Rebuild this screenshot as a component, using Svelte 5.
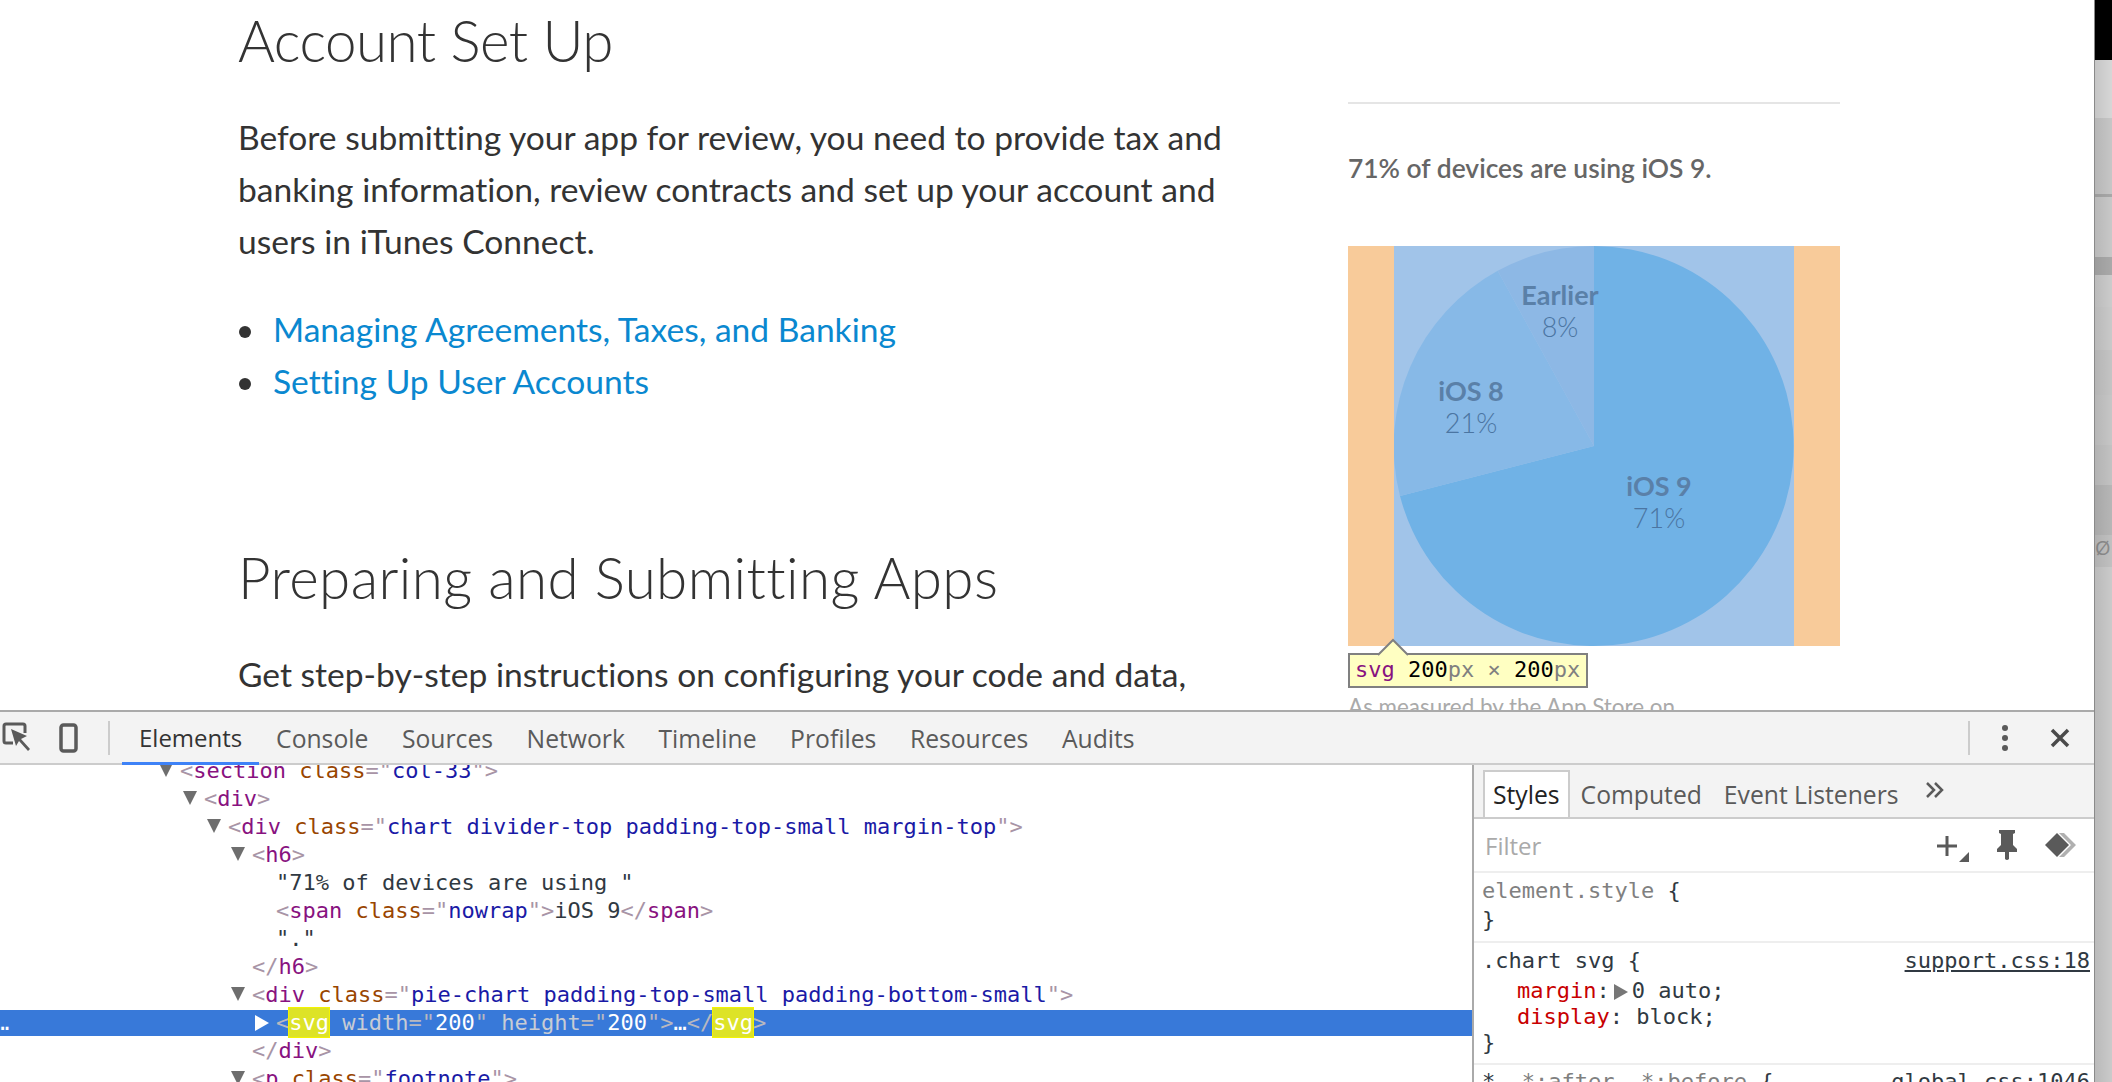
<script>
  const rows = [
    { level: 0, open: true, parts: [['b', '<'], ['t', 'section'], ['a', ' class'], ['b', '="'], ['v', 'col-33'], ['b', '">']] },
    { level: 1, open: true, parts: [['b', '<'], ['t', 'div'], ['b', '>']] },
    { level: 2, open: true, parts: [['b', '<'], ['t', 'div'], ['a', ' class'], ['b', '="'], ['v', 'chart divider-top padding-top-small margin-top'], ['b', '">']] },
    { level: 3, open: true, parts: [['b', '<'], ['t', 'h6'], ['b', '>']] },
    { level: 4, parts: [['x', '"71% of devices are using "']] },
    { level: 4, parts: [['b', '<'], ['t', 'span'], ['a', ' class'], ['b', '="'], ['v', 'nowrap'], ['b', '">'], ['x', 'iOS 9'], ['b', '</'], ['t', 'span'], ['b', '>']] },
    { level: 4, parts: [['x', '"."']] },
    { level: 3, parts: [['b', '</'], ['t', 'h6'], ['b', '>']] },
    { level: 3, open: true, parts: [['b', '<'], ['t', 'div'], ['a', ' class'], ['b', '="'], ['v', 'pie-chart padding-top-small padding-bottom-small'], ['b', '">']] },
    { level: 4, closed: true, selected: true, parts: [['b', '<'], ['h', 'svg'], ['a', ' width'], ['b', '="'], ['v', '200'], ['b', '"'], ['a', ' height'], ['b', '="'], ['v', '200'], ['b', '">'], ['x', '…'], ['b', '</'], ['h', 'svg'], ['b', '>']] },
    { level: 3, parts: [['b', '</'], ['t', 'div'], ['b', '>']] },
    { level: 3, open: true, parts: [['b', '<'], ['t', 'p'], ['a', ' class'], ['b', '="'], ['v', 'footnote'], ['b', '">']] }
  ];
  const tabs = ['Elements', 'Console', 'Sources', 'Network', 'Timeline', 'Profiles', 'Resources', 'Audits'];
  const bands = [
    { h: 60, c: '#000' }, { h: 58, c: '#d6d6d6' }, { h: 76, c: '#c6c6c6' }, { h: 3, c: '#a8a8a8' },
    { h: 60, c: '#c8c8c8' }, { h: 18, c: '#a9a9a9' }, { h: 32, c: '#cbcbcb' }, { h: 43, c: '#c9c9c9' },
    { h: 45, c: '#c4c4c4' }, { h: 50, c: '#c6c6c6' }, { h: 40, c: '#c2c2c2' }, { h: 50, c: '#b6b6b6' },
    { h: 32, c: '#c0c0c0', mark: 'Ø' }, { h: 515, c: '#cacaca' }
  ];
</script>

<div class="screen">
  <div class="main">
    <div class="page">
      <div class="article">
        <h2 class="first">Account Set Up</h2>
        <p>Before submitting your app for review, you need to provide tax and banking information, review contracts and set up your account and users in iTunes Connect.</p>
        <ul>
          <li><a href="#a">Managing Agreements, Taxes, and Banking</a></li>
          <li><a href="#b">Setting Up User Accounts</a></li>
        </ul>
        <h2 class="second">Preparing and Submitting Apps</h2>
        <p>Get step-by-step instructions on configuring your code and data,</p>
      </div>
      <div class="aside">
        <h6>71% of devices are using iOS 9.</h6>
        <div class="chart">
          <svg width="400" height="400" viewBox="0 0 400 400">
            <rect width="400" height="400" fill="#a1c4e9" />
            <path d="M200 200 L200 0 A200 200 0 1 1 6 250 Z" fill="#70b2e6" />
            <path d="M200 200 L6 250 A200 200 0 0 1 103.700 24.800 Z" fill="#87b9e7" />
            <path d="M200 200 L103.700 24.800 A200 200 0 0 1 200 0 Z" fill="#8db8e5" />
            <g class="labels">
              <text class="name" x="166" y="59">Earlier</text>
              <text class="pct" x="166" y="91">8%</text>
              <text class="name" x="77" y="155">iOS 8</text>
              <text class="pct" x="77" y="187">21%</text>
              <text class="name" x="265" y="250">iOS 9</text>
              <text class="pct" x="265" y="282">71%</text>
            </g>
          </svg>
        </div>
        <p class="footnote">As measured by the App Store on</p>
        <div class="tip"><svg class="tip-arrow" width="32" height="18" viewBox="0 0 32 18"><path d="M1 17 L16 2 L31 17" fill="#ffffc2" stroke="#808080" stroke-width="2" /></svg><span class="tip-tag">svg</span>{' 200'}<span class="tip-px">{'px × '}</span>200<span class="tip-px">px</span></div>
      </div>
    </div>

    <div class="devtools">
      <div class="toolbar">
        <svg class="ic-inspect" width="34" height="34" viewBox="0 0 34 34">
          <path d="M12 22 H5 Q3 22 3 20 V5 Q3 3 5 3 H22 Q24 3 24 5 V12" fill="none" stroke="#5a5a5a" stroke-width="3" />
          <path d="M10 8 L26 15 L20 18 L29 28 L27 30 L18 20 L15 25 Z" fill="#5a5a5a" />
        </svg>
        <svg class="ic-device" width="20" height="30" viewBox="0 0 20 30">
          <rect x="2" y="2" width="15" height="26" rx="2.500" fill="none" stroke="#5a5a5a" stroke-width="3.500" />
        </svg>
        <span class="sep"></span>
        <div class="tabs">
          {#each tabs as tab, i}
            <span class="tab" class:active={i === 0}>{tab}</span>
          {/each}
        </div>
        <span class="spacer"></span>
        <span class="sep"></span>
        <svg class="ic-more" width="8" height="28" viewBox="0 0 8 28">
          <circle cx="4" cy="4" r="3" fill="#5a5a5a" /><circle cx="4" cy="14" r="3" fill="#5a5a5a" /><circle cx="4" cy="24" r="3" fill="#5a5a5a" />
        </svg>
        <svg class="ic-close" width="20" height="20" viewBox="0 0 20 20">
          <path d="M2 2 L18 18 M18 2 L2 18" stroke="#4a4a4a" stroke-width="3.500" />
        </svg>
      </div>
      <div class="panes">
        <div class="tree">
          <div class="tree-inner">
            {#each rows as row}
              <div class="row" class:selected={row.selected} style="padding-left: {180 + row.level * 24}px">{#if row.selected}<span class="dots">…</span>{/if}{#if row.open}<span class="tri down"></span>{/if}{#if row.closed}<span class="tri right"></span>{/if}{#each row.parts as [k, text]}<span class={k}>{text}</span>{/each}</div>
            {/each}
          </div>
        </div>
        <div class="sidebar">
          <div class="side-tabs">
            <span class="side-tab on">Styles</span>
            <span class="side-tab">Computed</span>
            <span class="side-tab">Event Listeners</span>
            <svg class="ic-chev" width="20" height="18" viewBox="0 0 20 18">
              <path d="M2 2 L9 9 L2 16 M10 2 L17 9 L10 16" fill="none" stroke="#5a5a5a" stroke-width="2.500" />
            </svg>
          </div>
          <div class="filter">
            <span class="filter-label">Filter</span>
            <svg width="34" height="30" viewBox="0 0 34 30" class="ic-plus">
              <path d="M1 13 H21 M11 3 V23" stroke="#5a5a5a" stroke-width="3" />
              <path d="M33 19 V29 H23 Z" fill="#5a5a5a" />
            </svg>
            <svg width="22" height="32" viewBox="0 0 22 32" class="ic-pin">
              <path d="M3 1 H19 V4 L17 5 V16 L21 20 V23 H13 V30 Q11 32 9 30 V23 H1 V20 L5 16 V5 L3 4 Z" fill="#5a5a5a" />
            </svg>
            <svg width="34" height="26" viewBox="0 0 34 26" class="ic-class">
              <path d="M20 1 L32 13 L20 25 H15 L27 13 L15 1 Z" fill="#b0b0b0" />
              <path d="M13 1 L25 13 L13 25 L1 13 Z" fill="#5a5a5a" />
            </svg>
          </div>
          <div class="rule r1">
            <div><span class="sel-dim">element.style</span> {'{'}</div>
            <div>{'}'}</div>
          </div>
          <div class="rule r2">
            <div class="head"><span>.chart svg {'{'}</span><span class="src">support.css:18</span></div>
            <div class="decl m"><span class="prop">margin</span>:<span class="mini"></span>0 auto;</div>
            <div class="decl"><span class="prop">display</span>: block;</div>
            <div>{'}'}</div>
          </div>
          <div class="rule r3">
            <div class="head"><span><span class="sel-dim-b">*</span>, <span class="sel-dim">*:after</span>, <span class="sel-dim">*:before</span> {'{'}</span><span class="src">global.css:1046</span></div>
          </div>
        </div>
      </div>
    </div>
  </div>
  <div class="strip">
    {#each bands as band}
      <div class="band" style="height: {band.h}px; background: {band.c}">{band.mark ?? ''}</div>
    {/each}
  </div>
</div>

<style>
  :global(body) {
    margin: 0;
    background: #fff;
  }

  .screen {
    display: flex;
    width: 2112px;
    height: 1082px;
    overflow: hidden;
  }

  .main {
    width: 2094px;
    display: flex;
    flex-direction: column;
  }

  .strip {
    flex: 1;
    border-left: 1px solid #8a8a8a;
    display: flex;
    flex-direction: column;
    position: relative;
  }

  .strip::after {
    content: '';
    position: absolute;
    inset: 60px 0 0 0;
    background: linear-gradient(90deg, rgba(0, 0, 0, .08), transparent);
  }

  .band {
    flex-shrink: 0;
    overflow: hidden;
    font-family: "Open Sans", sans-serif;
    font-size: 20px;
    line-height: 26px;
    color: #8c8c8c;
  }

  /* page content */
  .page {
    height: 710px;
    flex-shrink: 0;
    display: flex;
    overflow: hidden;
    font-family: Lato, "Open Sans", sans-serif;
    font-variant-ligatures: none;
    color: #333;
  }

  .article {
    width: 1020px;
    margin-left: 238px;
    flex-shrink: 0;
  }

  h2 {
    margin: 0;
    font-weight: 300;
    font-size: 56.5px;
    line-height: 70px;
    color: #333;
  }

  .first {
    margin-top: 5px;
    letter-spacing: -0.5px;
  }

  .second {
    margin-top: 135px;
    letter-spacing: 0.4px;
  }

  .article p {
    margin: 36px 0 0;
    font-size: 33.600px;
    line-height: 52px;
    color: #333;
    width: 1000px;
  }

  ul {
    margin: 36px 0 0;
    padding: 0 0 0 35px;
    list-style: none;
  }

  li {
    font-size: 33.600px;
    line-height: 52px;
  }

  li::before {
    content: '';
    display: inline-block;
    width: 12px;
    height: 12px;
    border-radius: 50%;
    background: #333;
    margin: 0 22px 3px -34px;
    vertical-align: middle;
  }

  a {
    color: #0a88d0;
    text-decoration: none;
  }

  .aside {
    width: 492px;
    margin-left: 90px;
    padding-top: 102px;
    position: relative;
  }

  h6 {
    margin: 0;
    border-top: 2px solid #e5e5e5;
    padding-top: 46px;
    font-size: 26.400px;
    line-height: 36px;
    font-weight: 600;
    color: #666;
  }

  .chart {
    margin-top: 60px;
    background: #f8cb9a;
    height: 400px;
  }

  .chart svg {
    display: block;
    margin: 0 auto;
  }

  .labels text {
    text-anchor: middle;
    font-size: 27px;
    fill: #5a80a8;
  }

  .labels .name {
    font-weight: 700;
  }

  .labels .pct {
    font-weight: 300;
    fill: #4b75a2;
  }

  .footnote {
    margin: 46px 0 0;
    font-size: 22.400px;
    line-height: 30px;
    color: #aaa;
  }

  .tip {
    position: absolute;
    left: 0;
    top: 653px;
    box-sizing: border-box;
    width: 240px;
    height: 35px;
    border: 2px solid #808080;
    background: #ffffc2;
    padding-left: 5px;
    font-family: "DejaVu Sans Mono", monospace;
    font-size: 22px;
    line-height: 30px;
    color: #000;
    white-space: pre;
  }

  .tip-arrow {
    position: absolute;
    left: 27px;
    top: -17px;
  }

  .tip-tag {
    color: #881280;
  }

  .tip-px {
    color: #808080;
  }

  /* devtools */
  .devtools {
    flex: 1;
    min-height: 0;
    display: flex;
    flex-direction: column;
    border-top: 2px solid #aaa;
  }

  .toolbar {
    height: 53px;
    flex-shrink: 0;
    box-sizing: border-box;
    border-bottom: 2px solid #ccc;
    background: #f3f3f3;
    display: flex;
    align-items: center;
    font-family: "Open Sans", sans-serif;
    font-size: 24.700px;
    color: #5a5a5a;
    position: relative;
    z-index: 1;
  }

  .ic-inspect {
    margin-left: 1px;
    flex-shrink: 0;
  }

  .ic-device {
    margin-left: 24px;
  }

  .sep {
    width: 2px;
    height: 34px;
    background: #ccc;
    margin-left: 29px;
  }

  .tabs {
    display: flex;
    align-self: stretch;
    margin-left: 12px;
  }

  .tab {
    padding: 0 16.800px;
    display: flex;
    align-items: center;
    height: 53px;
    box-sizing: border-box;
    white-space: nowrap;
  }

  .tab.active {
    color: #333;
    font-size: 24px;
    padding: 0 17px;
    border-bottom: 3px solid #3e82f7;
  }

  .spacer {
    flex: 1;
  }

  .ic-more {
    margin-left: 31px;
  }

  .ic-close {
    margin-left: 41px;
    margin-right: 24px;
  }

  .panes {
    flex: 1;
    min-height: 0;
    display: flex;
  }

  .tree {
    width: 1472px;
    flex-shrink: 0;
    overflow: hidden;
    font-family: "DejaVu Sans Mono", monospace;
    font-size: 22px;
    color: #303942;
  }

  .tree-inner {
    margin-top: -8px;
  }

  .row {
    position: relative;
    height: 28px;
    line-height: 28px;
    white-space: pre;
    box-sizing: border-box;
  }

  .row.selected {
    background: #3879d9;
    background-clip: padding-box;
    border-top: 1px solid transparent;
    border-bottom: 1px solid transparent;
    line-height: 26px;
    color: #fff;
  }

  .b { color: #a894a6; }
  .t { color: #881280; }
  .a { color: #994500; }
  .v { color: #1a1aa6; }

  .selected .b { color: #b8b8c0; }
  .selected .a { color: #c8ccd4; }
  .selected .v { color: #fff; }

  .h {
    background: #dde327;
    outline: 1px solid #f4f400;
    color: #fff;
    padding: 2px 0;
  }

  .dots {
    position: absolute;
    left: -4px;
    color: #fff;
  }

  .tri {
    position: absolute;
    width: 0;
    height: 0;
  }

  .tri.down {
    margin-left: -21px;
    margin-top: 6px;
    border-left: 7px solid transparent;
    border-right: 7px solid transparent;
    border-top: 14px solid #6e6e6e;
  }

  .tri.right {
    margin-left: -21px;
    margin-top: 5px;
    border-top: 8px solid transparent;
    border-bottom: 8px solid transparent;
    border-left: 14px solid #fff;
  }

  .sidebar {
    flex: 1;
    min-width: 0;
    border-left: 2px solid #aaa;
    overflow: hidden;
    font-family: "DejaVu Sans Mono", monospace;
    font-size: 22px;
    color: #303942;
  }

  .side-tabs {
    height: 54px;
    box-sizing: border-box;
    background: #f3f3f3;
    border-bottom: 2px solid #ccc;
    display: flex;
    align-items: flex-end;
    padding-left: 9px;
    font-family: "Open Sans", sans-serif;
    font-size: 24.700px;
    color: #5a5a5a;
  }

  .side-tab {
    height: 47px;
    box-sizing: border-box;
    line-height: 46px;
    padding: 0 9px;
    border: 2px solid transparent;
    border-bottom: none;
    white-space: nowrap;
  }

  .side-tab.on {
    background: #fff;
    color: #222;
    border-color: #ccc;
    padding: 0 8px;
  }

  .ic-chev {
    margin: 0 0 18px 15px;
  }

  .filter {
    height: 54px;
    box-sizing: border-box;
    border-bottom: 2px solid #eee;
    display: flex;
    align-items: center;
    padding-left: 11px;
    font-family: "Open Sans", sans-serif;
    font-size: 24px;
    color: #aaa;
  }

  .filter-label {
    flex: 1;
  }

  .ic-plus {
    margin: 6px 0 0;
  }

  .ic-pin {
    margin: 0 0 0 26px;
  }

  .ic-class {
    margin: 0 16px 0 26px;
  }

  .rule {
    padding: 0 4px 0 8px;
    line-height: 29px;
    border-bottom: 2px solid #eee;
    box-sizing: border-box;
  }

  .r1 {
    height: 70px;
    padding-top: 3px;
  }

  .r2 {
    height: 122px;
    padding-top: 3px;
    line-height: 26px;
  }

  .r2 .head {
    margin-bottom: 3px;
    line-height: 29px;
  }

  .r3 {
    border-bottom: none;
    padding-top: 2px;
  }

  .head {
    display: flex;
    justify-content: space-between;
  }

  .sel-dim {
    color: #808080;
  }

  .sel-dim-b {
    color: #303942;
  }

  .src {
    color: #303942;
    text-decoration: underline;
  }

  .decl {
    padding-left: 35px;
  }

  .prop {
    color: #c80000;
  }

  .mini {
    display: inline-block;
    width: 0;
    height: 0;
    border-top: 8px solid transparent;
    border-bottom: 8px solid transparent;
    border-left: 14px solid #777;
    margin: 0 4px 0 4px;
    vertical-align: -2px;
  }
</style>
